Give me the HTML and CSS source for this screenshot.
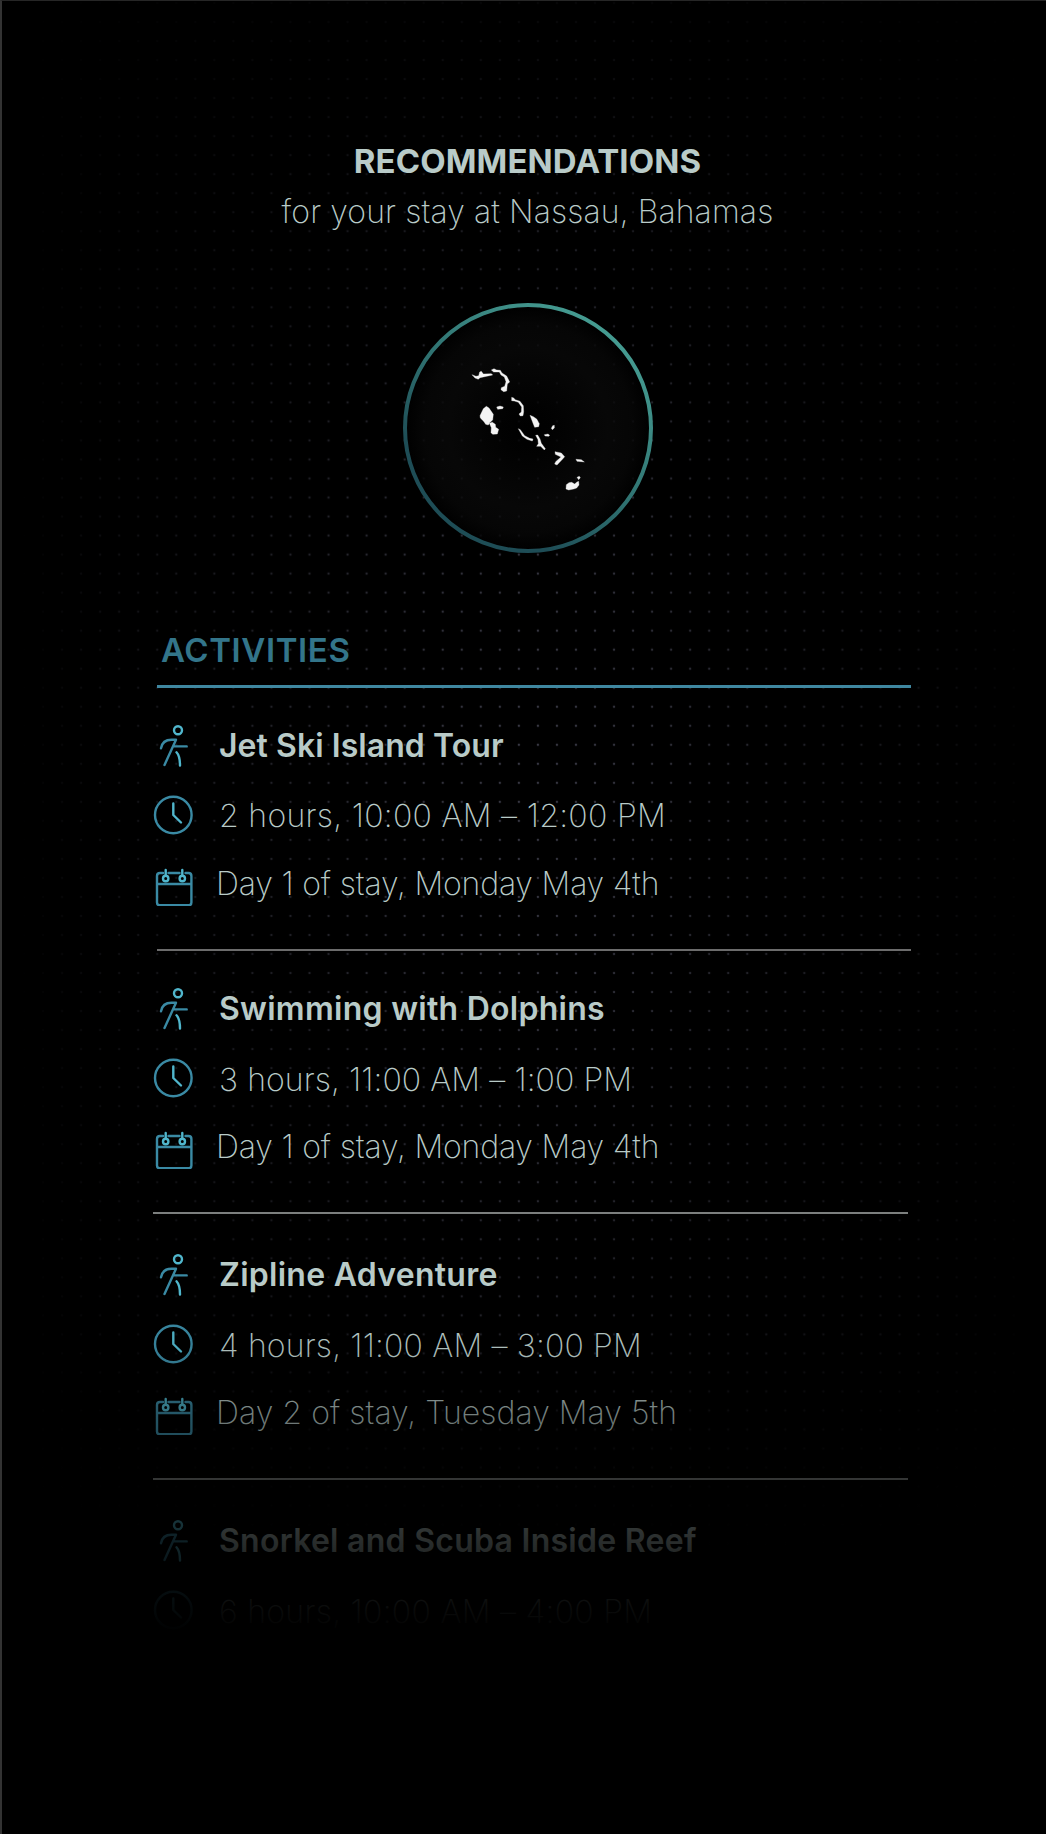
FILE: index.html
```html
<!DOCTYPE html>
<html lang="en">
<head>
<meta charset="utf-8">
<title>Recommendations</title>
<link rel="stylesheet" href="styles.css">
</head>
<body>
<svg width="0" height="0" class="defs">
  <symbol id="runner" viewBox="0 0 40 42">
    <circle class="bright" cx="25" cy="5.3" r="4"/>
    <path d="M8 23.3C9 17.5 13 14.8 18.5 14.8H23L11.5 40M20.5 21.4H33.7"/>
    <path class="bright" d="M23.5 27.3Q27 31 27 40.5"/>
  </symbol>
  <symbol id="clock" viewBox="0 0 40 42">
    <circle cx="20.3" cy="20" r="18.3"/>
    <path class="bright" d="M20.3 8.5V20L28 27.5"/>
  </symbol>
  <symbol id="calendar" viewBox="0 0 40 42">
    <path d="M10 9H7Q4 9 4 12V38.500Q4 41.300 7 41.300H35.500Q38.400 41.300 38.400 38.500V12Q38.400 9 35.500 9H32.500M15.500 9H26.500M4 20H38.400"/>
    <path class="bright" d="M12.700 6V11.700M29.300 6V11.700"/>
    <circle class="bright" cx="12.700" cy="14.500" r="2.700"/>
    <circle class="bright" cx="29.300" cy="14.500" r="2.700"/>
  </symbol>
</svg>

<div class="screen">
  <svg class="dots" width="1046" height="1834">
    <defs>
      <pattern id="grid" width="19.033" height="19.02" x="14.500" y="12.500" patternUnits="userSpaceOnUse">
        <circle cx="9.500" cy="9.500" r="1.200" fill="#3a3a46"/>
      </pattern>
      <linearGradient id="across">
        <stop offset=".02" stop-color="#fff" stop-opacity="0"/>
        <stop offset=".12" stop-color="#fff" stop-opacity=".3"/>
        <stop offset=".3" stop-color="#fff" stop-opacity=".65"/>
        <stop offset=".5" stop-color="#fff"/>
        <stop offset=".7" stop-color="#fff" stop-opacity=".7"/>
        <stop offset=".88" stop-color="#fff" stop-opacity=".3"/>
        <stop offset=".99" stop-color="#fff" stop-opacity="0"/>
      </linearGradient>
      <linearGradient id="down" x2="0" y2="1">
        <stop offset="0" stop-color="#000" stop-opacity=".9"/>
        <stop offset=".12" stop-color="#000" stop-opacity=".5"/>
        <stop offset=".3" stop-color="#000" stop-opacity=".1"/>
        <stop offset=".4" stop-color="#000" stop-opacity="0"/>
        <stop offset=".55" stop-color="#000" stop-opacity=".15"/>
        <stop offset=".72" stop-color="#000" stop-opacity=".4"/>
        <stop offset=".85" stop-color="#000"/>
      </linearGradient>
      <mask id="vignette">
        <rect width="1046" height="1834" fill="url(#across)"/>
        <rect width="1046" height="1834" fill="url(#down)"/>
      </mask>
    </defs>
    <rect width="1046" height="1834" fill="url(#grid)" mask="url(#vignette)"/>
  </svg>

  <header class="header">
    <h1 class="title">RECOMMENDATIONS</h1>
    <p class="subtitle">for your stay at Nassau, Bahamas</p>
    <svg class="map" viewBox="-6 -7 840 840">
      <defs>
        <linearGradient id="ring" x1=".8" y1=".1" x2=".2" y2=".9">
          <stop offset="0" stop-color="#459b91"/>
          <stop offset=".5" stop-color="#2f7271"/>
          <stop offset=".85" stop-color="#1e4d56"/>
          <stop offset="1" stop-color="#1e4d56"/>
        </linearGradient>
        <radialGradient id="disc">
          <stop offset="0" stop-color="#000"/>
          <stop offset=".2" stop-color="#020202"/>
          <stop offset=".65" stop-color="#090909"/>
          <stop offset=".85" stop-color="#070707"/>
          <stop offset="1" stop-color="#000"/>
        </radialGradient>
      </defs>
      <circle cx="414" cy="413" r="369" fill="url(#disc)" fill-opacity=".8" stroke="url(#ring)" stroke-width="12"/>
      <g class="islands">
        <path d="M246 253L258 258L266 256L269 245L274 243L280 251L304 250L308 254L270 262L265 267L255 263Z"/>
        <path d="M304 239L312 235L320 239L331 240L336 248L350 257L359 275L352 281L350 302L341 304L333 298L334 292L344 288L348 274L343 260L333 254L328 245L311 245Z"/>
        <path d="M320 350L330 347L340 350L338 355L323 357Z"/>
        <path d="M289 348L297 353L310 372L308 389L299 397L295 404L287 402L282 394L271 383L270 376L280 355Z"/>
        <path d="M298 399L307 396L316 402L317 411L326 417L322 431L308 432L303 427L304 412Z"/>
        <path d="M365 321L371 323L376 328L390 333L400 346L401 364L399 376L391 377L387 371L394 365L395 350L385 336L373 332L365 331Z"/>
        <path d="M420 375L430 379L440 386L448 400L446 409L434 411L430 401Z"/>
        <path d="M385 415L391 418L404 436L419 444L429 446L427 452L411 447L397 437Z"/>
        <path d="M437 435L443 434L450 446L454 459L466 475L463 479L452 468L440 468L445 460L444 448Z"/>
        <path d="M463 433L474 431L479 435L476 438L465 437Z"/>
        <path d="M488 406L493 405L493 413L487 418L484 414Z"/>
        <path d="M495 484L514 488L524 499L518 506L501 524L494 521L497 514L513 500L496 492Z"/>
        <path d="M558 507L574 508L583 515L575 514L561 513Z"/>
        <path d="M561 561L568 558L571 562L566 568Z"/>
        <path d="M566 573L567 584L560 593L551 596L536 599L528 596L529 583L537 577L545 576L554 581L561 575Z"/>
      </g>
    </svg>
  </header>

  <main class="activities">
    <h2 class="section-title">ACTIVITIES</h2>
    <ul class="list">
      <li class="item item--jetski">
        <svg class="icon"><use href="#runner"/></svg><h3 class="name">Jet Ski Island Tour</h3>
        <svg class="icon"><use href="#clock"/></svg><p class="time">2 hours, 10:00 AM – 12:00 PM</p>
        <svg class="icon"><use href="#calendar"/></svg><p class="date">Day 1 of stay, Monday May 4th</p>
      </li>
      <li class="item item--dolphins">
        <svg class="icon"><use href="#runner"/></svg><h3 class="name">Swimming with Dolphins</h3>
        <svg class="icon"><use href="#clock"/></svg><p class="time">3 hours, 11:00 AM – 1:00 PM</p>
        <svg class="icon"><use href="#calendar"/></svg><p class="date">Day 1 of stay, Monday May 4th</p>
      </li>
      <li class="item item--zipline">
        <svg class="icon"><use href="#runner"/></svg><h3 class="name">Zipline Adventure</h3>
        <svg class="icon"><use href="#clock"/></svg><p class="time">4 hours, 11:00 AM – 3:00 PM</p>
        <svg class="icon"><use href="#calendar"/></svg><p class="date">Day 2 of stay, Tuesday May 5th</p>
      </li>
      <li class="item item--snorkel">
        <svg class="icon"><use href="#runner"/></svg><h3 class="name">Snorkel and Scuba Inside Reef</h3>
        <svg class="icon"><use href="#clock"/></svg><p class="time">6 hours, 10:00 AM – 4:00 PM</p>
      </li>
    </ul>
  </main>
  <div class="fade"></div>
</div>
</body>
</html>
```
FILE: styles.css
```css
* { box-sizing: border-box; margin: 0; padding: 0; }

body { background: #000; }

.defs { position: absolute; }

.screen {
  position: relative;
  width: 1046px;
  height: 1834px;
  overflow: hidden;
  background: #000;
  border-top: 1px solid #262626;
  border-left: 2px solid #333;
  color: #b9cbc8;
  font: 200 32px/40px Inter, "Liberation Sans", sans-serif;
}

.dots { position: absolute; top: -1px; left: -2px; }

.header {
  position: relative;
  display: flex;
  flex-direction: column;
  align-items: center;
  padding: 140px 0 0 7px;
}

.title { font-size: 33px; font-weight: 750; letter-spacing: .1px; }
.subtitle { margin-top: 11px; letter-spacing: .1px; }
.map { width: 280px; height: 280px; margin-top: 56px; }
.islands { fill: #f4f4f4; stroke: #f4f4f4; stroke-width: 1; stroke-linejoin: round; }

.activities {
  position: relative;
  width: 758px;
  margin: 62px 0 0 151px;
}

.section-title {
  height: 58px;
  margin-left: 4px;
  padding-left: 4px;
  border-bottom: 3px solid #3f87a0;
  color: #33758a;
  font-size: 33px;
  font-weight: 600;
  letter-spacing: .6px;
}

.list { list-style: none; }

.item {
  position: relative;
  display: grid;
  grid-template-columns: 40px 1fr;
  grid-template-rows: 40px 40px 40px;
  column-gap: 26px;
  row-gap: 30px;
  height: 263px;
  padding-top: 37px;
}

.item::after {
  content: "";
  position: absolute;
  right: 3px;
  bottom: 0;
  left: 0;
  height: 2px;
  background: #7c7f7e;
}

.item--jetski::after { right: 0; left: 4px; background: #6c6c6c; }
.item--zipline, .item--snorkel { height: 266px; padding-top: 40px; }
.item--snorkel::after { display: none; }

.icon {
  width: 40px;
  height: 42px;
  overflow: visible;
  fill: none;
  stroke: #3a8aa4;
  stroke-width: 2.4;
  stroke-linecap: round;
  stroke-linejoin: round;
}

.icon:last-of-type { margin-top: -1px; }
.item--snorkel .icon:last-of-type { margin-top: 0; }
.bright { stroke: #50b6cc; }

.name, .time, .date { white-space: nowrap; }
.name { margin-top: 1px; font-size: 32px; font-weight: 600; letter-spacing: .27px; }
.time { margin-top: 2px; letter-spacing: .3px; }
.date { margin-top: -1px; margin-left: -3px; letter-spacing: -.17px; }

.item--jetski .name { letter-spacing: .06px; }
.item--jetski .time { margin-top: 1px; }
.item--dolphins .time { letter-spacing: .08px; }
.item--zipline .time { letter-spacing: .17px; }
.item--zipline .date { letter-spacing: .05px; }

.fade {
  position: absolute;
  right: 0;
  bottom: 0;
  left: 0;
  height: 534px;
  background: linear-gradient(rgba(0,0,0,0), rgba(0,0,0,.08) 50px, rgba(0,0,0,.38) 115px, rgba(0,0,0,.58) 178px, rgba(0,0,0,.76) 235px, rgba(0,0,0,.93) 300px, #000 335px);
}
```
